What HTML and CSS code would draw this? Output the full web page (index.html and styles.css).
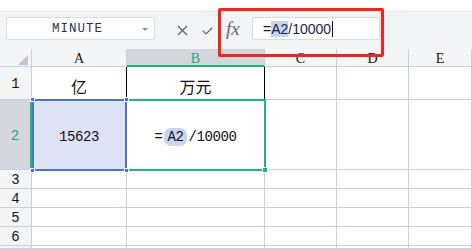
FILE: index.html
```html
<!DOCTYPE html>
<html lang="zh-CN">
<head>
    <meta charset="UTF-8">
    <meta name="viewport" content="width=device-width, initial-scale=1.0">
    <title>亿 换算 万元</title>
    <link rel="stylesheet" href="styles.css">
</head>
<body>
<div class="window">
    <div class="topbar"></div>

    <!-- Formula bar -->
    <div class="formula-bar">
        <div class="name-box">
            <span class="name">MINUTE</span>
            <span class="drop"></span>
        </div>
        <svg class="btn-x" width="11" height="11" viewBox="0 0 11 11">
            <path d="M1 1 L10 10 M10 1 L1 10" stroke="#5f6672" stroke-width="1.3" fill="none"/>
        </svg>
        <svg class="btn-ok" width="11" height="8" viewBox="0 0 11 8">
            <path d="M0.7 3.6 L4 6.9 L10.3 0.7" stroke="#5f6672" stroke-width="1.3" fill="none"/>
        </svg>
        <span class="fx">fx</span>
        <div class="input">=<span class="ref">A2</span>/10000<span class="caret"></span></div>

        <!-- annotation -->
        <div class="mark"></div>
    </div>

    <!-- Sheet -->
    <div class="sheet">
        <div class="hd corner"><span class="tri"></span></div>
        <div class="hd col">A</div>
        <div class="hd col active">B</div>
        <div class="hd col">C</div>
        <div class="hd col">D</div>
        <div class="hd col">E</div>

        <div class="hd row">1</div>
        <div class="cell r1 edge-r">亿</div>
        <div class="cell r1 edge-r">万元</div>
        <div class="cell"></div>
        <div class="cell"></div>
        <div class="cell"></div>

        <div class="hd row active">2</div>
        <div class="cell r2 picked">15623
            <span class="sel-blue"></span>
            <span class="knob k1"></span><span class="knob k2"></span>
            <span class="knob k3"></span><span class="knob k4"></span>
        </div>
        <div class="cell r2">=<span class="ref pill">A2</span>/10000
            <span class="sel-green"></span>
            <span class="knob green"></span>
        </div>
        <div class="cell"></div>
        <div class="cell"></div>
        <div class="cell"></div>

        <div class="hd row">3</div>
        <div class="cell"></div><div class="cell"></div><div class="cell"></div><div class="cell"></div><div class="cell"></div>
        <div class="hd row">4</div>
        <div class="cell"></div><div class="cell"></div><div class="cell"></div><div class="cell"></div><div class="cell"></div>
        <div class="hd row">5</div>
        <div class="cell"></div><div class="cell"></div><div class="cell"></div><div class="cell"></div><div class="cell"></div>
        <div class="hd row">6</div>
        <div class="cell"></div><div class="cell"></div><div class="cell"></div><div class="cell"></div><div class="cell"></div>
        <div class="hd row"></div>
        <div class="cell"></div><div class="cell"></div><div class="cell"></div><div class="cell"></div><div class="cell"></div>
    </div>
</div>
</body>
</html>
```

FILE: styles.css
```css
* {
    margin: 0;
    padding: 0;
    box-sizing: border-box;
}

body {
    width: 472px;
    height: 249px;
    overflow: hidden;
    background: #fff;
    font-family: "Liberation Mono", "Noto Sans CJK SC", monospace;
}

.window {
    display: flex;
    flex-direction: column;
    height: 100%;
}

.window > * {
    flex-shrink: 0;
}

/* Top strip */
.topbar {
    height: 12px;
    background: #fff;
    border-bottom: 1px solid #e4e6ea;
}

/* Formula bar */
.formula-bar {
    position: relative;
    height: 37px;
    display: flex;
    align-items: flex-start;
    padding-top: 5px;
    background: #f3f4f6;
}

.name-box {
    position: relative;
    width: 149px;
    height: 23px;
    margin-left: 6px;
    background: #fff;
    border: 1px solid #d8dade;
    border-radius: 2px;
    display: flex;
    align-items: center;
    justify-content: center;
}

.name {
    font-size: 12.5px;
    letter-spacing: 1px;
    color: #27304e;
    margin-left: -6px;
}

.drop {
    position: absolute;
    right: 6px;
    top: 10px;
    border-left: 3px solid transparent;
    border-right: 3px solid transparent;
    border-top: 3px solid #8a8f99;
}

.btn-x {
    margin-left: 22px;
    margin-top: 8px;
}

.btn-ok {
    margin-left: 14px;
    margin-top: 10px;
}

.fx {
    width: 16px;
    margin-left: 13px;
    margin-top: 1px;
    font-family: "Liberation Serif", serif;
    font-style: italic;
    font-size: 19px;
    color: #5d6573;
}

.input {
    width: 128px;
    height: 23px;
    margin-left: 10px;
    background: #fff;
    border: 1px solid #d8dade;
    border-radius: 2px;
    padding-left: 10px;
    display: flex;
    align-items: center;
    font-family: "Liberation Sans", sans-serif;
    font-size: 14px;
    color: #1b2340;
}

.input .ref {
    background: #c5d4ef;
    line-height: 16px;
}

.caret {
    width: 1px;
    height: 16px;
    margin-left: 1px;
    background: #111;
}

/* red annotation frame */
.mark {
    position: absolute;
    left: 218px;
    top: -4px;
    width: 166px;
    height: 49px;
    border: 3px solid #f5231b;
    border-radius: 2px;
}

/* Sheet grid */
.sheet {
    flex: 1 1 0;
    min-height: 0;
    overflow: hidden;
    display: grid;
    grid-template-columns: 32px 95px 138px 72px 72px 1fr;
    grid-template-rows: 18px 33px 70px 19px 19px 19px 19px 1fr;
}

.hd,
.cell {
    border-right: 1px solid #c9cedb;
    border-bottom: 1px solid #c9cedb;
    display: flex;
    justify-content: center;
    align-items: center;
    color: #111;
}

.hd {
    background: #f4f5f7;
    font-size: 13px;
}

.hd.col {
    font-family: "Liberation Serif", serif;
    font-size: 14px;
    padding-top: 3px;
}

.hd.col.active {
    background: #d3d6dd;
    color: #1fa96f;
    border-bottom: 2px solid #1db67c;
}

.hd.row {
    font-size: 14px;
    padding-top: 2px;
}

.hd.row.active {
    background: #d4d7de;
    color: #1fa96f;
    border-right: 2px solid #1db67c;
}

.corner {
    position: relative;
}

.tri {
    position: absolute;
    right: 3px;
    bottom: 1px;
    border-left: 10px solid transparent;
    border-bottom: 10px solid #c3c6cc;
}

.cell {
    position: relative;
    font-size: 14px;
    letter-spacing: -0.4px;
}

.cell.r1 {
    font-family: "Noto Sans CJK SC", sans-serif;
    font-size: 16px;
    letter-spacing: 0;
    padding-top: 6px;
}

.cell.edge-r {
    border-right-color: #000;
}

.cell.r2 {
    padding-top: 4px;
}

.picked {
    background: #dde3f5;
}

.pill {
    background: #c9d5f0;
    border-radius: 7px;
    padding: 1px 3px;
    margin: 0 2px;
}

/* selection frames */
.sel-blue {
    position: absolute;
    left: 0;
    top: -1px;
    right: -1px;
    bottom: -2px;
    border: 2px solid #4a72d2;
    z-index: 2;
}

.sel-green {
    position: absolute;
    left: -2px;
    top: -1px;
    right: -2px;
    bottom: -2px;
    border: 2px solid #1db67c;
    z-index: 1;
}

.knob {
    position: absolute;
    width: 5px;
    height: 5px;
    background: #4a72d2;
    border: 1px solid #fff;
    z-index: 3;
}

.k1 { left: -2px; top: -3px; }
.k2 { right: -3px; top: -3px; }
.k3 { left: -2px; bottom: -4px; }
.k4 { right: -3px; bottom: -4px; }

.knob.green {
    background: #1db67c;
    right: -4px;
    bottom: -4px;
    width: 6px;
    height: 6px;
}
```
